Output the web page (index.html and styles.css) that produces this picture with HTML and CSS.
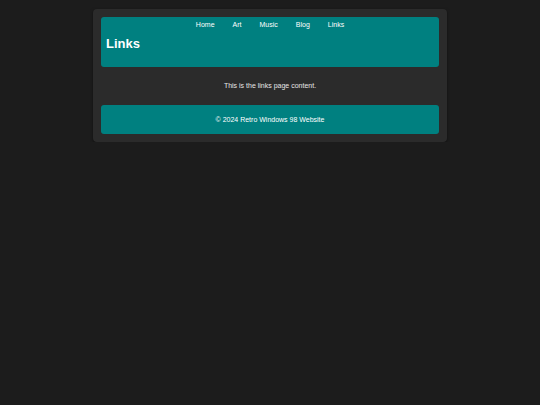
FILE: index.html
```html
<!DOCTYPE html>
<html lang="en">
<head>
<meta charset="utf-8">
<title>Links</title>
<link rel="stylesheet" href="styles.css">
</head>
<body>
<div class="window">
  <header class="header">
    <nav class="nav">
      <a href="#">Home</a>
      <a href="#">Art</a>
      <a href="#">Music</a>
      <a href="#">Blog</a>
      <a href="#">Links</a>
    </nav>
    <h1 class="title">Links</h1>
  </header>
  <main class="content">
    <p>This is the links page content.</p>
  </main>
  <footer class="footer">
    <p>&copy; 2024 Retro Windows 98 Website</p>
  </footer>
</div>
</body>
</html>
```

FILE: styles.css
```css
html, body {
  margin: 0;
  padding: 0;
  background: #1c1c1c;
  font-family: "Liberation Sans", Arial, sans-serif;
}

.window {
  width: 338px;
  margin: 9px auto 0;
  padding: 8px;
  background: #2b2b2b;
  border-radius: 4px;
  box-shadow: 0 1px 3px rgba(0, 0, 0, 0.5);
}

.header {
  background: #008080;
  border-radius: 3px;
  padding: 4px 5px 16px;
}

.nav {
  display: flex;
  justify-content: center;
  gap: 18px;
  font-size: 7px;
  line-height: 8px;
}

.nav a {
  color: #ffffff;
  text-decoration: none;
}

.title {
  margin: 7px 0 0;
  font-size: 13px;
  line-height: 15px;
  font-weight: bold;
  color: #ffffff;
}

.content {
  padding: 15px 0;
  text-align: center;
  font-size: 7px;
  line-height: 8px;
  color: #e6e6e6;
}

.content p,
.footer p {
  margin: 0;
}

.footer {
  background: #008080;
  border-radius: 3px;
  padding: 10px 0;
  text-align: center;
  font-size: 7px;
  line-height: 9px;
  color: #ffffff;
}
```
